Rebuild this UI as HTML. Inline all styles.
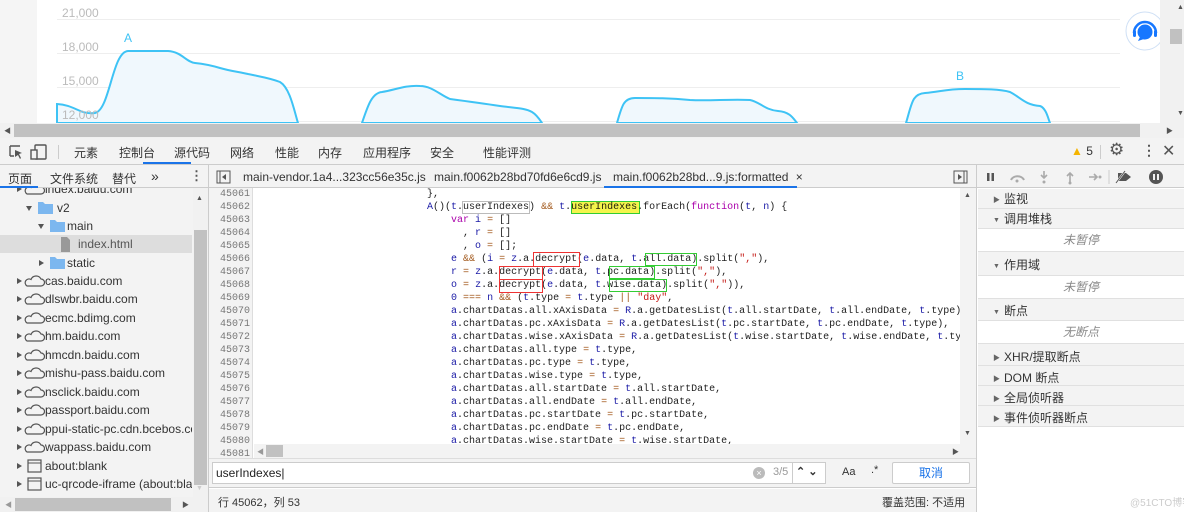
<!DOCTYPE html>
<html><head><meta charset="utf-8"><style>
*{box-sizing:border-box;margin:0;padding:0}
body{width:1184px;height:512px;overflow:hidden;position:relative;font-family:"Liberation Sans","Noto Sans CJK SC",sans-serif;font-size:12px;color:#333;background:#fff}
.a{position:absolute}
.t{position:absolute;white-space:nowrap}
.code{font-family:"Liberation Mono",monospace;font-size:10px;line-height:13px;white-space:pre;color:#222}
.k{color:#a0a}.v{color:#1a1aa6}.o{color:#a35a1e}.s{color:#c41a16}
.ln{position:absolute;left:208px;width:42px;text-align:right;font-family:"Liberation Mono",monospace;font-size:10px;line-height:13px;color:#777;white-space:pre}
.tree{position:absolute;left:0;top:188px;width:192px;height:309px;overflow:hidden}
.row{position:absolute;left:0;height:18px;white-space:nowrap;font-size:12px;color:#333;line-height:18px;width:192px}
.row svg{position:absolute;top:0}
.row span{position:absolute;top:0}
.rp div.h{position:absolute;left:978px;width:206px;height:20px;background:#f3f3f3;border-bottom:1px solid #e0e0e0;font-size:12px;line-height:20px;padding-left:15px;color:#333}
.rp div.e{position:absolute;left:978px;width:206px;height:23px;background:#fff;border-bottom:1px solid #e0e0e0;text-align:center;font-style:italic;color:#888;font-size:12px;line-height:23px}
.tri{font-size:7px;color:#666;margin-right:4px;position:relative;top:-1px}
.box{position:absolute;border:1.5px solid}
</style></head><body>
<!-- page -->
<div class="a" style="left:0;top:0;width:37px;height:123px;background:#f5f5f5"></div>
<div class="a" style="left:1160px;top:0;width:24px;height:123px;background:#f1f1f1"></div>
<div class="a" style="left:1170px;top:29px;width:12px;height:15px;background:#c1c1c1"></div>
<div class="t" style="left:1177px;top:4px;font-size:7px;color:#555">▲</div>
<div class="t" style="left:1177px;top:110px;font-size:7px;color:#555">▼</div>
<svg class="a" style="left:0;top:0" width="1160" height="123">
<g stroke="#eee" stroke-width="1"><line x1="57" y1="19.5" x2="1120" y2="19.5"/><line x1="57" y1="53.5" x2="1120" y2="53.5"/><line x1="57" y1="87.5" x2="1120" y2="87.5"/><line x1="57" y1="121.5" x2="1120" y2="121.5"/></g>
<g fill="#f0f8fd" stroke="#3ec3f5" stroke-width="2">
<path d="M57,104 C75,105 80,115 95,113 C110,110 112,52 128,51 L168,51 C182,52 186,62 195,63 C205,64 210,65 220,68 C230,71 240,72 248,74 C262,77 270,78 280,82 C290,88 294,110 298,123 L57,123Z"/>
<path d="M362,123 C368,105 372,93 382,92 C395,90 405,85 420,86 C432,86 440,95 450,99 C465,101 480,103 500,106 C515,108 525,108 532,112 C537,115 540,120 542,123Z"/>
<path d="M617,123 C622,105 624,98 635,98 C655,98 670,98 690,100 C710,101 730,99 750,100 C760,102 765,110 778,111 C790,112 793,118 797,123Z"/>
<path d="M906,123 C912,103 912,94 925,93 C940,92 945,89 965,89 C985,89 1000,89 1010,92 C1020,97 1025,105 1040,106 C1046,108 1048,118 1050,123Z"/>
</g>
<g font-family="Liberation Sans" font-size="12" fill="#bbb"><text x="62" y="17">21,000</text><text x="62" y="51">18,000</text><text x="62" y="85">15,000</text><text x="62" y="119">12,000</text></g>
<g font-family="Liberation Sans" font-size="12" fill="#3ec3f5"><text x="124" y="42">A</text><text x="956" y="80">B</text></g>
<circle cx="1145" cy="31" r="19" fill="#fff" stroke="#cfe0f5"/>
<path d="M1134,33 a11,11 0 0 1 22,0" fill="none" stroke="#1677ff" stroke-width="2.5"/>
<circle cx="1145" cy="32" r="7.5" fill="#1677ff"/><path d="M1140,37 l-2,4 l6,-2z" fill="#1677ff"/>
<rect x="1133" y="30" width="3" height="7" rx="1.5" fill="#1677ff"/><rect x="1154" y="30" width="3" height="7" rx="1.5" fill="#1677ff"/>
</svg>
<!-- hscroll -->
<div class="a" style="left:0;top:123px;width:1184px;height:15px;background:#f1f1f1"></div>
<div class="a" style="left:14px;top:124px;width:1126px;height:13px;background:#c1c1c1"></div>
<div class="t" style="left:4px;top:126px;font-size:7px;color:#555">◀</div>
<div class="t" style="left:1166px;top:126px;font-size:7px;color:#555">▶</div>
<!-- toolbar -->
<div class="a" style="left:0;top:138px;width:1184px;height:27px;background:#f3f3f3;border-bottom:1px solid #ccc"></div>
<svg class="a" style="left:8px;top:144px" width="42" height="16"><path d="M2,2 h10 M2,2 v10 M2,12 h4" stroke="#555" fill="none" stroke-width="1.4"/><path d="M7,6 l7,3 l-3,1 l2,4 l-1,1 l-2,-4 l-3,2z" fill="#555"/><rect x="27" y="1" width="11" height="14" rx="1" fill="none" stroke="#555" stroke-width="1.4"/><rect x="23" y="6" width="6" height="9" fill="#f3f3f3" stroke="#555" stroke-width="1.4"/></svg>
<div class="a" style="left:58px;top:145px;width:1px;height:14px;background:#ccc"></div>
<div class="t" style="left:74px;top:144px;font-size:12px;color:#333">元素</div>
<div class="t" style="left:119px;top:144px;color:#333">控制台</div>
<div class="t" style="left:174px;top:144px;color:#333">源代码</div>
<div class="a" style="left:143px;top:162px;width:48px;height:2px;background:#1a73e8"></div>
<div class="t" style="left:230px;top:144px;color:#333">网络</div>
<div class="t" style="left:275px;top:144px;color:#333">性能</div>
<div class="t" style="left:318px;top:144px;color:#333">内存</div>
<div class="t" style="left:363px;top:144px;color:#333">应用程序</div>
<div class="t" style="left:430px;top:144px;color:#333">安全</div>
<div class="t" style="left:483px;top:144px;color:#333">性能评测</div>
<div class="t" style="left:1071px;top:144px;color:#333"><span style="color:#f4b400">▲</span> 5</div>
<div class="a" style="left:1100px;top:145px;width:1px;height:14px;background:#ccc"></div>
<div class="t" style="left:1109px;top:140px;font-size:17px;color:#555">⚙</div>
<div class="t" style="left:1142px;top:142px;font-size:14px;color:#555;font-weight:bold">⋮</div>
<div class="t" style="left:1162px;top:141px;font-size:16px;color:#555">✕</div>
<!-- second row -->
<div class="a" style="left:0;top:165px;width:1184px;height:23px;background:#f3f3f3;border-bottom:1px solid #ccc"></div>
<div class="a" style="left:208px;top:165px;width:1px;height:347px;background:#ccc"></div>
<div class="a" style="left:976px;top:165px;width:1px;height:347px;background:#ccc"></div>
<div class="t" style="left:8px;top:170px">页面</div>
<div class="a" style="left:0;top:186px;width:38px;height:2px;background:#1a73e8"></div>
<div class="t" style="left:50px;top:170px">文件系统</div>
<div class="t" style="left:112px;top:170px">替代</div>
<div class="t" style="left:151px;top:168px;font-size:14px">»</div>
<div class="t" style="left:190px;top:168px;font-size:13px;font-weight:bold;color:#555">⋮</div>
<svg class="a" style="left:216px;top:170px" width="16" height="14"><rect x="1" y="1" width="13" height="12" fill="none" stroke="#555"/><line x1="4" y1="1" x2="4" y2="13" stroke="#555"/><path d="M10,4 l-4,3 l4,3z" fill="#555"/></svg>
<div class="t" style="left:243px;top:170px;color:#333">main-vendor.1a4...323cc56e35c.js</div>
<div class="t" style="left:434px;top:170px;color:#333">main.f0062b28bd70fd6e6cd9.js</div>
<div class="t" style="left:613px;top:170px;color:#333">main.f0062b28bd...9.js:formatted <span style="margin-left:4px">×</span></div>
<div class="a" style="left:604px;top:186px;width:193px;height:2px;background:#1a73e8"></div>
<svg class="a" style="left:953px;top:170px" width="16" height="14"><rect x="1" y="1" width="13" height="12" fill="none" stroke="#555"/><line x1="11" y1="1" x2="11" y2="13" stroke="#555"/><path d="M5,4 l4,3 l-4,3z" fill="#555"/></svg>
<svg class="a" style="left:984px;top:168px" width="180" height="18" fill="#555">
<rect x="3" y="5" width="2.5" height="8"/><rect x="7.5" y="5" width="2.5" height="8"/>
<path d="M27,12 a7,6 0 0 1 13,0" stroke="#aaa" stroke-width="2" fill="none"/><circle cx="33" cy="13" r="1.5" fill="#aaa"/>
<path d="M60,3 v7 M57,7 l3,3 l3,-3" stroke="#aaa" stroke-width="1.6" fill="none"/><circle cx="60" cy="14" r="1.5" fill="#aaa"/>
<path d="M86,14 v-9 M83,8 l3,-3 l3,3" stroke="#aaa" stroke-width="1.6" fill="none"/><circle cx="86" cy="15" r="1.5" fill="#aaa"/>
<path d="M105,9 h8 M110,6 l3,3 l-3,3" stroke="#aaa" stroke-width="1.6" fill="none"/><circle cx="116" cy="9" r="1.5" fill="#aaa"/>
<line x1="125" y1="2" x2="125" y2="16" stroke="#ccc"/>
<path d="M134,5 h8 l5,4 l-5,4 h-8z"/><line x1="132" y1="15" x2="141" y2="3" stroke="#f3f3f3" stroke-width="2"/><line x1="132" y1="15" x2="141" y2="3" stroke="#555" stroke-width="1"/>
<circle cx="172" cy="9" r="7"/><rect x="169" y="6" width="2" height="6" fill="#f3f3f3"/><rect x="173" y="6" width="2" height="6" fill="#f3f3f3"/>
</svg>
<!-- left tree -->
<div class="a" style="left:0;top:188px;width:208px;height:324px;background:#f3f3f3"></div>
<div class="tree">
<div class="row" style="top:-8px"><svg style="left:17px" width="28" height="18"><path d="M0,6 l5,3 l-5,3z" fill="#555"/><path d="M10,14 h14 a3.5,3.5 0 0 0 0,-7 a5.5,5.5 0 0 0 -10,0.5 a3.3,3.3 0 0 0 -4,6.5z" fill="none" stroke="#555" stroke-width="1.2"/></svg><span style="left:45px">index.baidu.com</span></div>
<div class="row" style="top:11px"><svg style="left:26px" width="30" height="18"><path d="M0,7 h6 l-3,5z" fill="#555"/><path d="M12,3 h5 l2,2 h8 v10 h-15z" fill="#7cb7ef"/></svg><span style="left:57px">v2</span></div>
<div class="row" style="top:29px"><svg style="left:38px" width="30" height="18"><path d="M0,7 h6 l-3,5z" fill="#555"/><path d="M12,3 h5 l2,2 h8 v10 h-15z" fill="#7cb7ef"/></svg><span style="left:67px">main</span></div>
<div class="row" style="top:47px;background:#ddd"><svg style="left:60px" width="12" height="18"><path d="M1,2 h6 l3,3 v12 h-9z" fill="#999"/></svg><span style="left:78px;color:#555">index.html</span></div>
<div class="row" style="top:66px"><svg style="left:38px" width="30" height="18"><path d="M1,6 l5,3 l-5,3z" fill="#555"/><path d="M12,3 h5 l2,2 h8 v10 h-15z" fill="#7cb7ef"/></svg><span style="left:67px">static</span></div>
<div class="row" style="top:84px"><svg style="left:17px" width="28" height="18"><path d="M0,6 l5,3 l-5,3z" fill="#555"/><path d="M10,14 h14 a3.5,3.5 0 0 0 0,-7 a5.5,5.5 0 0 0 -10,0.5 a3.3,3.3 0 0 0 -4,6.5z" fill="none" stroke="#555" stroke-width="1.2"/></svg><span style="left:45px">cas.baidu.com</span></div>
<div class="row" style="top:102px"><svg style="left:17px" width="28" height="18"><path d="M0,6 l5,3 l-5,3z" fill="#555"/><path d="M10,14 h14 a3.5,3.5 0 0 0 0,-7 a5.5,5.5 0 0 0 -10,0.5 a3.3,3.3 0 0 0 -4,6.5z" fill="none" stroke="#555" stroke-width="1.2"/></svg><span style="left:45px">dlswbr.baidu.com</span></div>
<div class="row" style="top:121px"><svg style="left:17px" width="28" height="18"><path d="M0,6 l5,3 l-5,3z" fill="#555"/><path d="M10,14 h14 a3.5,3.5 0 0 0 0,-7 a5.5,5.5 0 0 0 -10,0.5 a3.3,3.3 0 0 0 -4,6.5z" fill="none" stroke="#555" stroke-width="1.2"/></svg><span style="left:45px">ecmc.bdimg.com</span></div>
<div class="row" style="top:139px"><svg style="left:17px" width="28" height="18"><path d="M0,6 l5,3 l-5,3z" fill="#555"/><path d="M10,14 h14 a3.5,3.5 0 0 0 0,-7 a5.5,5.5 0 0 0 -10,0.5 a3.3,3.3 0 0 0 -4,6.5z" fill="none" stroke="#555" stroke-width="1.2"/></svg><span style="left:45px">hm.baidu.com</span></div>
<div class="row" style="top:158px"><svg style="left:17px" width="28" height="18"><path d="M0,6 l5,3 l-5,3z" fill="#555"/><path d="M10,14 h14 a3.5,3.5 0 0 0 0,-7 a5.5,5.5 0 0 0 -10,0.5 a3.3,3.3 0 0 0 -4,6.5z" fill="none" stroke="#555" stroke-width="1.2"/></svg><span style="left:45px">hmcdn.baidu.com</span></div>
<div class="row" style="top:176px"><svg style="left:17px" width="28" height="18"><path d="M0,6 l5,3 l-5,3z" fill="#555"/><path d="M10,14 h14 a3.5,3.5 0 0 0 0,-7 a5.5,5.5 0 0 0 -10,0.5 a3.3,3.3 0 0 0 -4,6.5z" fill="none" stroke="#555" stroke-width="1.2"/></svg><span style="left:45px">mishu-pass.baidu.com</span></div>
<div class="row" style="top:195px"><svg style="left:17px" width="28" height="18"><path d="M0,6 l5,3 l-5,3z" fill="#555"/><path d="M10,14 h14 a3.5,3.5 0 0 0 0,-7 a5.5,5.5 0 0 0 -10,0.5 a3.3,3.3 0 0 0 -4,6.5z" fill="none" stroke="#555" stroke-width="1.2"/></svg><span style="left:45px">nsclick.baidu.com</span></div>
<div class="row" style="top:213px"><svg style="left:17px" width="28" height="18"><path d="M0,6 l5,3 l-5,3z" fill="#555"/><path d="M10,14 h14 a3.5,3.5 0 0 0 0,-7 a5.5,5.5 0 0 0 -10,0.5 a3.3,3.3 0 0 0 -4,6.5z" fill="none" stroke="#555" stroke-width="1.2"/></svg><span style="left:45px">passport.baidu.com</span></div>
<div class="row" style="top:232px"><svg style="left:17px" width="28" height="18"><path d="M0,6 l5,3 l-5,3z" fill="#555"/><path d="M10,14 h14 a3.5,3.5 0 0 0 0,-7 a5.5,5.5 0 0 0 -10,0.5 a3.3,3.3 0 0 0 -4,6.5z" fill="none" stroke="#555" stroke-width="1.2"/></svg><span style="left:45px">ppui-static-pc.cdn.bcebos.com</span></div>
<div class="row" style="top:250px"><svg style="left:17px" width="28" height="18"><path d="M0,6 l5,3 l-5,3z" fill="#555"/><path d="M10,14 h14 a3.5,3.5 0 0 0 0,-7 a5.5,5.5 0 0 0 -10,0.5 a3.3,3.3 0 0 0 -4,6.5z" fill="none" stroke="#555" stroke-width="1.2"/></svg><span style="left:45px">wappass.baidu.com</span></div>
<div class="row" style="top:269px"><svg style="left:17px" width="28" height="18"><path d="M0,6 l5,3 l-5,3z" fill="#555"/><rect x="11" y="3" width="13" height="12" fill="none" stroke="#555" stroke-width="1.2"/><line x1="11" y1="6" x2="24" y2="6" stroke="#555"/></svg><span style="left:45px">about:blank</span></div>
<div class="row" style="top:287px"><svg style="left:17px" width="28" height="18"><path d="M0,6 l5,3 l-5,3z" fill="#555"/><rect x="11" y="3" width="13" height="12" fill="none" stroke="#555" stroke-width="1.2"/><line x1="11" y1="6" x2="24" y2="6" stroke="#555"/></svg><span style="left:45px">uc-qrcode-iframe (about:blank)</span></div>
</div>
<div class="a" style="left:193px;top:188px;width:15px;height:309px;background:#f1f1f1"></div>
<div class="a" style="left:194px;top:230px;width:13px;height:255px;background:#c1c1c1"></div>
<div class="t" style="left:196px;top:195px;font-size:7px;color:#555">▲</div>
<div class="t" style="left:196px;top:485px;font-size:7px;color:#ccc">▼</div>
<div class="a" style="left:0;top:497px;width:208px;height:15px;background:#f1f1f1"></div>
<div class="a" style="left:15px;top:498px;width:156px;height:13px;background:#c1c1c1"></div>
<div class="t" style="left:5px;top:500px;font-size:7px;color:#999">◀</div>
<div class="t" style="left:182px;top:500px;font-size:7px;color:#555">▶</div>
<!-- editor -->
<div class="a" style="left:209px;top:188px;width:44px;height:270px;background:#f3f3f3;border-right:1px solid #ddd"></div>
<div class="ln" style="top:188px">45061
45062
45063
45064
45065
45066
45067
45068
45069
45070
45071
45072
45073
45074
45075
45076
45077
45078
45079
45080
45081</div>
<div class="a" style="left:254px;top:188px;width:706px;height:256px;overflow:hidden">
<div class="code" style="position:absolute;left:173px;top:0">},
<span class="v">A</span>()(<span class="v">t</span>.userIndexes) <span class="o">&amp;&amp;</span> <span class="v">t</span>.userIndexes.forEach(<span class="k">function</span>(<span class="v">t</span>, <span class="v">n</span>) {
    <span class="k">var</span> <span class="v">i</span> <span class="o">=</span> []
      , <span class="v">r</span> <span class="o">=</span> []
      , <span class="v">o</span> <span class="o">=</span> [];
    <span class="v">e</span> <span class="o">&amp;&amp;</span> (<span class="v">i</span> <span class="o">=</span> <span class="v">z</span>.a.decrypt(<span class="v">e</span>.data, <span class="v">t</span>.all.data).split(<span class="s">","</span>),
    <span class="v">r</span> <span class="o">=</span> <span class="v">z</span>.a.decrypt(<span class="v">e</span>.data, <span class="v">t</span>.pc.data).split(<span class="s">","</span>),
    <span class="v">o</span> <span class="o">=</span> <span class="v">z</span>.a.decrypt(<span class="v">e</span>.data, <span class="v">t</span>.wise.data).split(<span class="s">","</span>)),
    <span class="v">0</span> <span class="o">===</span> <span class="v">n</span> <span class="o">&amp;&amp;</span> (<span class="v">t</span>.type <span class="o">=</span> <span class="v">t</span>.type <span class="o">||</span> <span class="s">"day"</span>,
    <span class="v">a</span>.chartDatas.all.xAxisData <span class="o">=</span> <span class="v">R</span>.a.getDatesList(<span class="v">t</span>.all.startDate, <span class="v">t</span>.all.endDate, <span class="v">t</span>.type),
    <span class="v">a</span>.chartDatas.pc.xAxisData <span class="o">=</span> <span class="v">R</span>.a.getDatesList(<span class="v">t</span>.pc.startDate, <span class="v">t</span>.pc.endDate, <span class="v">t</span>.type),
    <span class="v">a</span>.chartDatas.wise.xAxisData <span class="o">=</span> <span class="v">R</span>.a.getDatesList(<span class="v">t</span>.wise.startDate, <span class="v">t</span>.wise.endDate, <span class="v">t</span>.type),
    <span class="v">a</span>.chartDatas.all.type <span class="o">=</span> <span class="v">t</span>.type,
    <span class="v">a</span>.chartDatas.pc.type <span class="o">=</span> <span class="v">t</span>.type,
    <span class="v">a</span>.chartDatas.wise.type <span class="o">=</span> <span class="v">t</span>.type,
    <span class="v">a</span>.chartDatas.all.startDate <span class="o">=</span> <span class="v">t</span>.all.startDate,
    <span class="v">a</span>.chartDatas.all.endDate <span class="o">=</span> <span class="v">t</span>.all.endDate,
    <span class="v">a</span>.chartDatas.pc.startDate <span class="o">=</span> <span class="v">t</span>.pc.startDate,
    <span class="v">a</span>.chartDatas.pc.endDate <span class="o">=</span> <span class="v">t</span>.pc.endDate,
    <span class="v">a</span>.chartDatas.wise.startDate <span class="o">=</span> <span class="v">t</span>.wise.startDate,</div>
<div class="box" style="left:208px;top:13px;width:68px;height:13px;border-color:#bbb;border-width:1px"></div>
<div class="box" style="left:317px;top:13px;width:69px;height:13px;border-color:#3c3;background:rgba(240,240,0,.7);mix-blend-mode:multiply"></div>
<div class="box" style="left:279px;top:64px;width:47px;height:15px;border-color:#e33"></div>
<div class="box" style="left:391px;top:65px;width:52px;height:13px;border-color:#3c3"></div>
<div class="box" style="left:245px;top:78px;width:44px;height:14px;border-color:#e33"></div>
<div class="box" style="left:355px;top:78px;width:46px;height:13px;border-color:#3c3"></div>
<div class="box" style="left:245px;top:91px;width:44px;height:14px;border-color:#e33"></div>
<div class="box" style="left:355px;top:91px;width:58px;height:13px;border-color:#3c3"></div>
</div>
<div class="a" style="left:960px;top:188px;width:16px;height:256px;background:#f3f3f3"></div>
<div class="t" style="left:964px;top:192px;font-size:7px;color:#555">▲</div>
<div class="t" style="left:964px;top:430px;font-size:7px;color:#555">▼</div>
<div class="a" style="left:254px;top:444px;width:722px;height:14px;background:#f3f3f3"></div>
<div class="a" style="left:266px;top:445px;width:17px;height:12px;background:#c1c1c1"></div>
<div class="t" style="left:257px;top:447px;font-size:7px;color:#999">◀</div>
<div class="t" style="left:952px;top:447px;font-size:7px;color:#555">▶</div>
<!-- search bar -->
<div class="a" style="left:209px;top:458px;width:767px;height:30px;background:#f3f3f3;border-top:1px solid #ddd;border-bottom:1px solid #ccc"></div>
<div class="a" style="left:212px;top:462px;width:614px;height:22px;background:#fff;border:1px solid #ccc"></div>
<div class="t" style="left:216px;top:466px;font-size:12px;color:#222">userIndexes|</div>
<div class="a" style="left:753px;top:467px;width:12px;height:12px;border-radius:6px;background:#bbb;color:#fff;font-size:9px;line-height:12px;text-align:center">×</div>
<div class="t" style="left:773px;top:466px;font-size:11px;color:#999">3/5</div>
<div class="a" style="left:792px;top:463px;width:1px;height:20px;background:#ccc"></div>
<div class="t" style="left:796px;top:465px;font-size:11px;color:#333;font-weight:bold">⌃ ⌄</div>
<div class="t" style="left:842px;top:466px;font-size:11px;color:#333">Aa</div>
<div class="t" style="left:871px;top:464px;font-size:11px;color:#333">.*</div>
<div class="a" style="left:892px;top:462px;width:78px;height:22px;background:#fff;border:1px solid #ccc;border-radius:2px;text-align:center;color:#1a73e8;line-height:20px">取消</div>
<!-- status -->
<div class="a" style="left:209px;top:489px;width:767px;height:23px;background:#f3f3f3"></div>
<div class="t" style="left:218px;top:494px;font-size:11px;color:#333">行 45062，列 53</div>
<div class="t" style="left:882px;top:494px;font-size:11px;color:#333">覆盖范围: 不适用</div>
<!-- right panel -->
<div class="rp">
<div class="h" style="top:189px"><span class="tri">▶</span>监视</div>
<div class="h" style="top:209px"><span class="tri">▼</span>调用堆栈</div>
<div class="e" style="top:229px">未暂停</div>
<div class="h" style="top:252px;height:24px;line-height:26px"><span class="tri">▼</span>作用域</div>
<div class="e" style="top:276px">未暂停</div>
<div class="h" style="top:299px;height:22px;line-height:24px"><span class="tri">▼</span>断点</div>
<div class="e" style="top:321px">无断点</div>
<div class="h" style="top:344px;height:22px;line-height:26px"><span class="tri">▶</span>XHR/提取断点</div>
<div class="h" style="top:366px;height:20px;line-height:24px"><span class="tri">▶</span>DOM 断点</div>
<div class="h" style="top:386px;height:20px;line-height:24px"><span class="tri">▶</span>全局侦听器</div>
<div class="h" style="top:406px;height:21px;line-height:24px"><span class="tri">▶</span>事件侦听器断点</div>
</div>
<div class="a" style="left:977px;top:427px;width:207px;height:85px;background:#fff"></div>
<div class="t" style="left:1130px;top:494px;font-size:10px;color:#ccc">@51CTO博客</div>
</body></html>
